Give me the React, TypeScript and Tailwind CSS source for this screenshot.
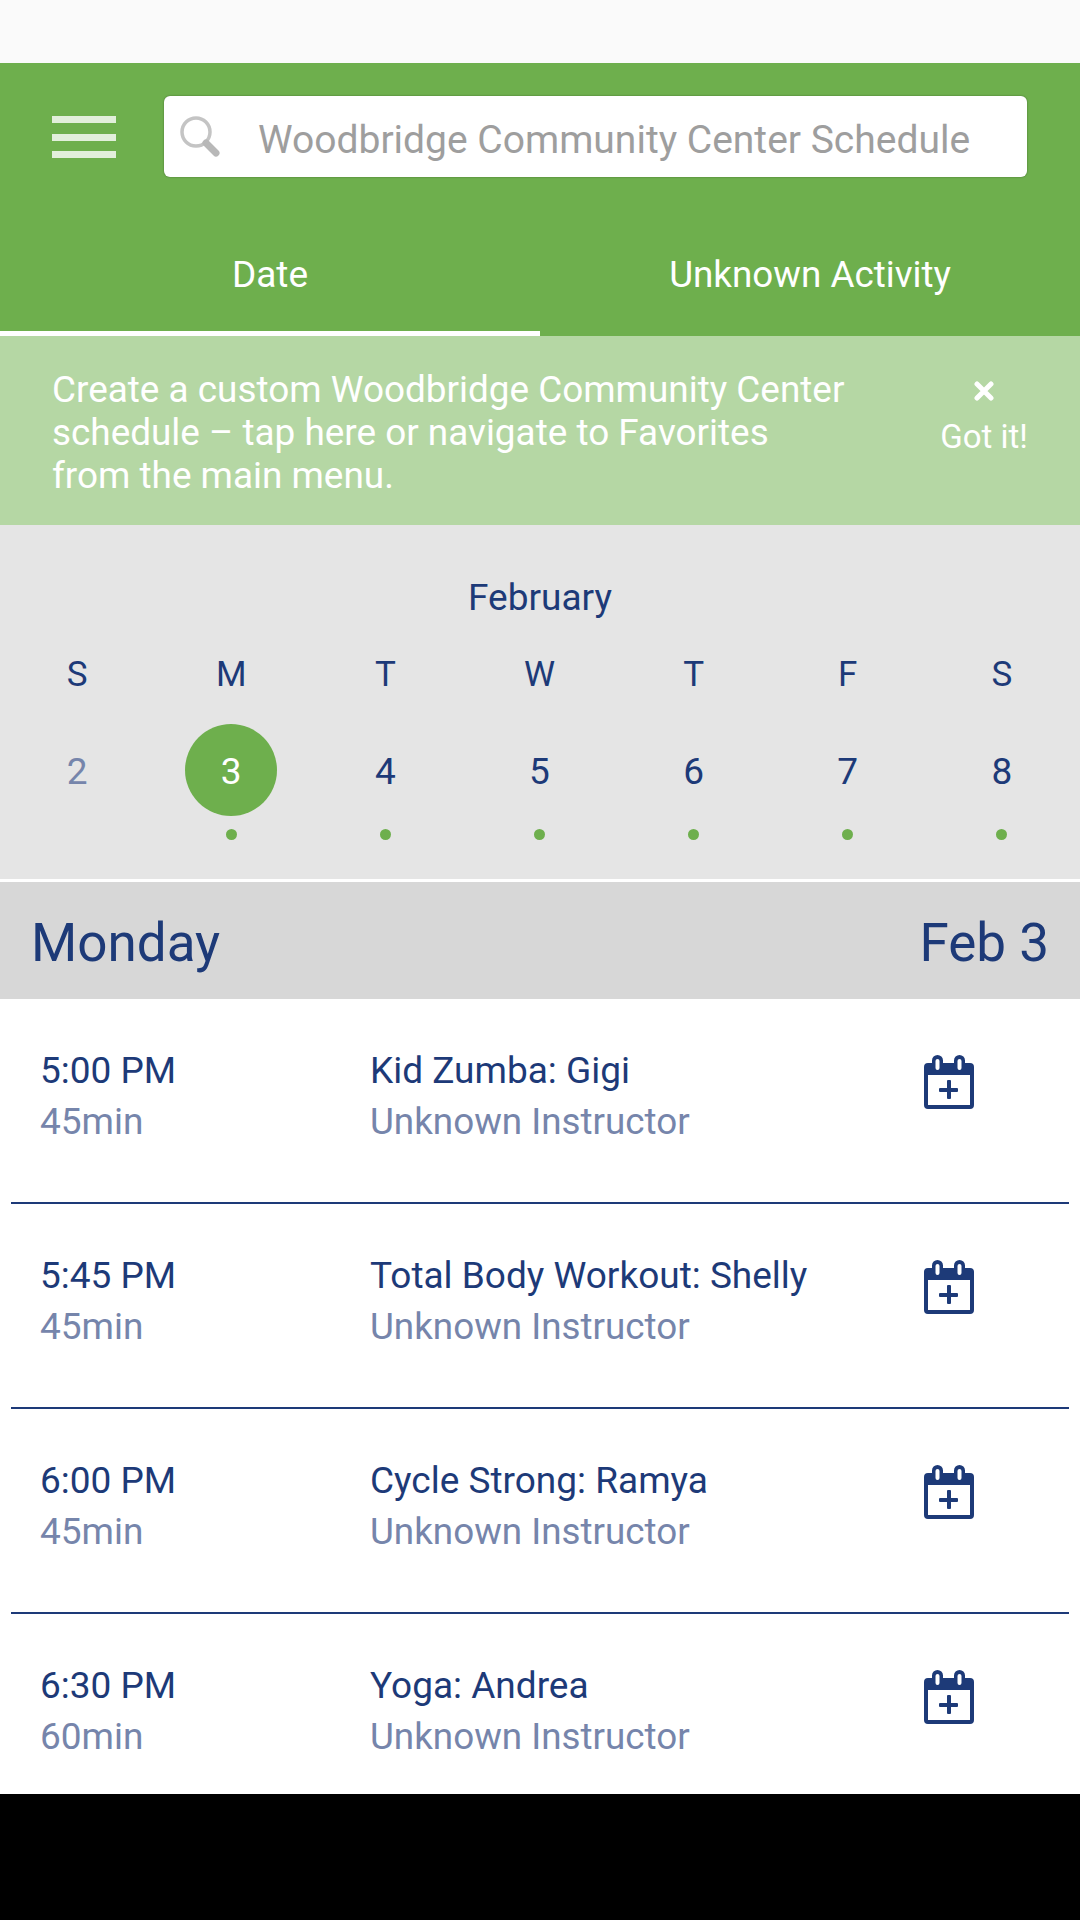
const rows = [
  { time: "5:00 PM", dur: "45min", name: "Kid Zumba: Gigi" },
  { time: "5:45 PM", dur: "45min", name: "Total Body Workout: Shelly" },
  { time: "6:00 PM", dur: "45min", name: "Cycle Strong: Ramya" },
  { time: "6:30 PM", dur: "60min", name: "Yoga: Andrea" },
];
const days = ["S", "M", "T", "W", "T", "F", "S"];
const dates = ["2", "3", "4", "5", "6", "7", "8"];

function CalPlus() {
  return (
    <svg width="50" height="54" viewBox="0 0 50 54" fill="none">
      <path fillRule="evenodd" clipRule="evenodd" fill="#1d3a78" d="M4 8H8V5.500a5.500 5.500 0 0 1 11 0V8H30V5.500a5.500 5.500 0 0 1 11 0V8H46a4 4 0 0 1 4 4V50a4 4 0 0 1-4 4H4a4 4 0 0 1-4-4V12a4 4 0 0 1 4-4zM11.500 6v7a2 2 0 0 0 4 0V6a2 2 0 0 0-4 0zM33.500 6v7a2 2 0 0 0 4 0V6a2 2 0 0 0-4 0zM4 20V50H46V20z" />
      <rect x="15" y="33" width="19" height="4" rx="1" fill="#1d3a78" />
      <rect x="23" y="25" width="4" height="19" rx="1" fill="#1d3a78" />
    </svg>
  );
}

export default function App() {
  return (
    <div className="w-[1080px] h-[1920px] bg-white flex flex-col overflow-hidden font-['Roboto',sans-serif] text-[#1d3a78]">
      <div className="h-[63px] shrink-0 bg-[#fafafa]" />
      <div className="h-[273px] shrink-0 bg-[#6eaf4d] flex flex-col">
        <div className="flex items-start pt-[33px] pl-[52px] pr-[53px]">
          <div className="w-[64px] h-[42px] mt-[20px] flex flex-col justify-between">
            <div className="h-[7px] bg-[#e2efdb]" />
            <div className="h-[7px] bg-[#e2efdb]" />
            <div className="h-[7px] bg-[#e2efdb]" />
          </div>
          <div className="ml-[48px] flex-1 h-[81px] bg-white rounded-[6px] flex items-center shadow-[0_0_2px_rgba(0,0,0,0.4)]">
            <svg className="ml-[15px]" width="41" height="44" viewBox="0 0 41 44" fill="none">
              <circle cx="17" cy="17" r="14" stroke="#c4c4c4" strokeWidth="3.500" />
              <path d="M27 28 L37 38" stroke="#b8b8b8" strokeWidth="7" strokeLinecap="round" />
            </svg>
            <span className="ml-[38px] pt-[7px] text-[39px] leading-none text-[#9e9e9e] whitespace-nowrap">Woodbridge Community Center Schedule</span>
          </div>
        </div>
        <div className="flex mt-auto h-[122px]">
          <div className="flex-1 border-b-[5px] border-white flex items-center justify-center text-white text-[37px] pt-[5px]">Date</div>
          <div className="flex-1 flex items-center justify-center text-white text-[36.8px]">Unknown Activity</div>
        </div>
      </div>
      <div className="h-[189px] shrink-0 bg-[#b5d7a4] flex text-white">
        <div className="w-[880px] pl-[52px] pr-[28px] pt-[32px] text-[36.9px] leading-[43px]">
          Create a custom Woodbridge Community Center schedule – tap here or navigate to Favorites from the main menu.
        </div>
        <div className="flex-1 flex flex-col items-center pt-[45px] pl-[8px]">
          <svg width="20" height="20" viewBox="0 0 20 20">
            <path d="M3 3 L17 17 M17 3 L3 17" stroke="#fff" strokeWidth="5" strokeLinecap="round" />
          </svg>
          <span className="text-[33px] leading-none mt-[19px] whitespace-nowrap">Got it!</span>
        </div>
      </div>
      <div className="h-[354px] shrink-0 bg-[#e5e5e5] flex flex-col">
        <div className="text-center text-[37px] leading-none mt-[54px]">February</div>
        <div className="grid grid-cols-7 mt-[41px] pr-[1px]">
          {days.map((d, i) => (
            <div key={i} className="text-center text-[35px] leading-none">{d}</div>
          ))}
        </div>
        <div className="grid grid-cols-7 mt-[32px] pr-[1px]">
          {dates.map((d, i) => (
            <div key={i} className="flex flex-col items-center">
              <div className={"w-[92px] h-[92px] pt-[3px] rounded-full flex items-center justify-center text-[37px] " + (i === 1 ? "bg-[#6eaf4d] text-white" : i === 0 ? "text-[#7685ab]" : "text-[#1d3a78]")}>{d}</div>
              <div className={"w-[11px] h-[11px] rounded-full mt-[13px] " + (i === 0 ? "" : "bg-[#6eaf4d]")} />
            </div>
          ))}
        </div>
      </div>
      <div className="h-[3px] shrink-0 bg-white" />
      <div className="h-[117px] shrink-0 bg-[#d7d7d7] flex items-center justify-between pl-[31px] pr-[31px] pt-[6px] text-[53px] leading-none">
        <span>Monday</span>
        <span>Feb 3</span>
      </div>
      <div className="flex-1 min-h-0 overflow-hidden flex flex-col">
        {rows.map((r, i) => (
          <div key={i} className={"h-[205px] mx-[11px] flex shrink-0 " + (i < 3 ? "border-b-[2px] border-[#1d3a78]" : "")}>
            <div className="w-[359px] pl-[29px] pt-[46px]">
              <div className="text-[37px] leading-[51px]">{r.time}</div>
              <div className="text-[37px] leading-[51px] text-[#7685ab]">{r.dur}</div>
            </div>
            <div className="w-[554px] pt-[46px]">
              <div className="text-[37px] leading-[51px]">{r.name}</div>
              <div className="text-[36.8px] leading-[51px] text-[#7685ab]">Unknown Instructor</div>
            </div>
            <div className="pt-[56px]"><CalPlus /></div>
          </div>
        ))}
      </div>
      <div className="h-[126px] bg-black shrink-0" />
    </div>
  );
}
